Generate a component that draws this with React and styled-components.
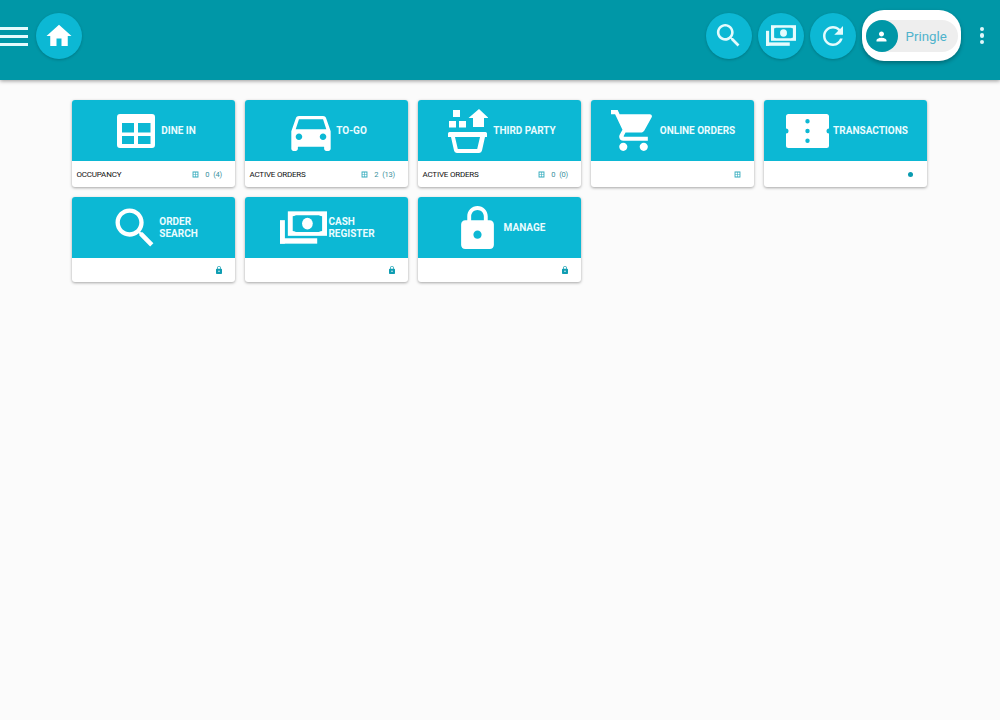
import React from "react";
import styled, { createGlobalStyle } from "styled-components";

const CARD = "#0cb8d4";

const Global = createGlobalStyle`
  html, body { margin: 0; padding: 0; background: #fafafa; }
  body { font-family: Roboto, "Liberation Sans", sans-serif; }
`;

const Page = styled.div`
  width: 1000px;
  height: 720px;
  overflow: hidden;
  background: #fbfbfb;
`;
const TopBar = styled.header`
  height: 80px;
  background: #0097a7;
  box-shadow: 0 1px 4px rgba(0, 0, 0, 0.4);
  display: flex;
  align-items: center;
`;
const LeftGroup = styled.div`
  display: flex;
  align-items: center;
  gap: 8px;
  margin-top: -8px;
`;
const RightGroup = styled.div`
  margin-left: auto;
  display: flex;
  align-items: center;
  gap: 6px;
  margin-top: -9px;
  padding-right: 16px;
`;
const Burger = styled.div`
  width: 28px;
  display: flex;
  flex-direction: column;
  gap: 5px;
  & > i {
    display: block;
    height: 3px;
    background: #e4fbfd;
  }
`;
const RoundButton = styled.div`
  width: 46px;
  height: 46px;
  border-radius: 50%;
  background: ${CARD};
  display: flex;
  align-items: center;
  justify-content: center;
  box-shadow: 0 1px 3px rgba(0, 0, 0, 0.2);
  & > svg {
    display: block;
  }
`;
const UserChip = styled.div`
  width: 99px;
  height: 51px;
  box-sizing: border-box;
  background: #fff;
  border-radius: 22px;
  padding: 10px 3px 9px 4px;
  box-shadow: 0 2px 4px rgba(0, 0, 0, 0.3);
`;
const UserInner = styled.div`
  height: 32px;
  border-radius: 16px;
  background: #eeeeee;
  display: flex;
  align-items: center;
  gap: 8px;
  color: #4fb3cc;
  font-size: 13.3px;
  font-weight: 400;
`;
const Avatar = styled.div`
  width: 32px;
  height: 32px;
  border-radius: 50%;
  background: #0097a7;
  display: flex;
  align-items: center;
  justify-content: center;
`;
const Kebab = styled.div`
  display: flex;
  flex-direction: column;
  gap: 2px;
  margin-left: 13px;
  & > i {
    width: 4.5px;
    height: 4.5px;
    border-radius: 50%;
    background: #dff7fa;
  }
`;
const Grid = styled.main`
  display: grid;
  grid-template-columns: repeat(5, 163px);
  gap: 10px;
  padding: 20px 0 0 72px;
`;
const Card = styled.section`
  height: ${(p) => (p.$short ? "85px" : "87px")};
  border-radius: 3px;
  overflow: hidden;
  background: #fff;
  box-shadow: 0 1px 3px rgba(0, 0, 0, 0.35);
  display: flex;
  flex-direction: column;
`;
const CardTop = styled.div`
  height: 61px;
  background: ${CARD};
  display: flex;
  align-items: center;
  justify-content: center;
  gap: 2px;
`;
const IconBox = styled.div`
  width: 48px;
  height: 48px;
  flex: none;
  display: flex;
  align-items: center;
  justify-content: center;
  transform: translate(${(p) => p.$dx || 0}px, ${(p) => p.$dy || 0}px);
  & > svg {
    flex: none;
    display: block;
  }
`;
const Label = styled.div`
  color: #eafcff;
  font-size: 10px;
  line-height: 12px;
  font-weight: 700;
  padding-top: 1px;
  white-space: ${(p) => (p.$nowrap ? "nowrap" : "normal")};
  width: ${(p) => (p.$nowrap ? "auto" : "min-content")};
`;
const CardFoot = styled.div`
  flex: 1;
  display: flex;
  align-items: center;
  justify-content: space-between;
  padding: 0 13px 0 4.500px;
  font-size: 8px;
  letter-spacing: -0.2px;
  color: #111;
`;
const Stats = styled.div`
  display: flex;
  align-items: center;
  margin-left: auto;
  color: #3a8f9c;
  font-size: 7.500px;
  & > svg {
    display: block;
  }
`;
const Count = styled.span`
  margin-left: ${(p) => p.$gap}px;
`;
const Dot = styled.span`
  width: 5px;
  height: 5px;
  margin-right: 1px;
  border-radius: 50%;
  background: #0a9bb0;
`;

const P = {
  home: "M10 20v-6h4v6h5v-8h3L12 3 2 12h3v8z",
  search:
    "M15.5 14h-.79l-.28-.27C15.41 12.59 16 11.11 16 9.5 16 5.91 13.09 3 9.5 3S3 5.91 3 9.5 5.91 16 9.5 16c1.61 0 3.09-.59 4.23-1.57l.27.28v.79l5 4.99L20.49 19l-4.99-5zm-6 0C7.01 14 5 11.99 5 9.5S7.01 5 9.5 5 14 7.01 14 9.5 11.99 14 9.5 14z",
  refresh:
    "M17.65 6.35C16.2 4.9 14.21 4 12 4c-4.42 0-7.99 3.58-7.99 8s3.57 8 7.99 8c3.73 0 6.84-2.55 7.73-6h-2.08c-.82 2.33-3.04 4-5.65 4-3.31 0-6-2.69-6-6s2.69-6 6-6c1.66 0 3.14.69 4.22 1.78L13 11h7V4l-2.35 2.35z",
  person:
    "M12 12c2.21 0 4-1.79 4-4s-1.79-4-4-4-4 1.79-4 4 1.79 4 4 4zm0 2c-2.67 0-8 1.34-8 4v2h16v-2c0-2.66-5.33-4-8-4z",
  lock: "M18 8h-1V6c0-2.76-2.24-5-5-5S7 3.24 7 6v2H6c-1.1 0-2 .9-2 2v10c0 1.1.9 2 2 2h12c1.1 0 2-.9 2-2V10c0-1.1-.9-2-2-2zm-6 9c-1.1 0-2-.9-2-2s.9-2 2-2 2 .9 2 2-.9 2-2 2zm3.1-9H8.9V6c0-1.71 1.39-3.1 3.1-3.1 1.71 0 3.1 1.39 3.1 3.1v2z",
  car: "M18.92 6.01C18.72 5.42 18.16 5 17.5 5h-11c-.66 0-1.21.42-1.42 1.01L3 12v8c0 .55.45 1 1 1h1c.55 0 1-.45 1-1v-1h12v1c0 .55.45 1 1 1h1c.55 0 1-.45 1-1v-8l-2.08-5.99zM6.5 16c-.83 0-1.5-.67-1.5-1.5S5.67 13 6.5 13s1.5.67 1.5 1.5S7.33 16 6.5 16zm11 0c-.83 0-1.5-.67-1.5-1.5s.67-1.5 1.5-1.5 1.5.67 1.5 1.5-.67 1.5-1.5 1.5zM5 11l1.5-4.5h11L19 11H5z",
  cart: "M7 18c-1.1 0-1.99.9-1.99 2S5.9 22 7 22s2-.9 2-2-.9-2-2-2zM1 2v2h2l3.6 7.59-1.35 2.45c-.16.28-.25.61-.25.96 0 1.1.9 2 2 2h12v-2H7.42c-.14 0-.25-.11-.25-.25l.03-.12.9-1.63h7.45c.75 0 1.41-.41 1.75-1.03l3.58-6.49c.08-.14.12-.31.12-.48 0-.55-.45-1-1-1H5.21l-.94-2H1z",
  cartWheel: "M17 18c-1.1 0-1.99.9-1.99 2s.89 2 1.99 2 2-.9 2-2-.9-2-2-2z",
  table:
    "M3 0h32a3 3 0 0 1 3 3v28a3 3 0 0 1-3 3H3a3 3 0 0 1-3-3V3a3 3 0 0 1 3-3zM5 9v9.500h12V9zm16 0v9.500h12.500V9zM5 22v8h12v-8zm16 0v8h12.500v-8z",
  ticket:
    "M2.500 0h38A2.500 2.500 0 0 1 43 2.500V14.500a2.500 2.500 0 0 0 0 5V31.500A2.500 2.500 0 0 1 40.500 34h-38A2.500 2.500 0 0 1 0 31.500V19.500a2.500 2.500 0 0 0 0-5V2.500A2.500 2.500 0 0 1 2.500 0zM21.500 5a2.200 2.200 0 1 0 0 4.400 2.200 2.200 0 0 0 0-4.400zm0 9.800a2.200 2.200 0 1 0 0 4.400 2.200 2.200 0 0 0 0-4.400zm0 9.800a2.200 2.200 0 1 0 0 4.400 2.200 2.200 0 0 0 0-4.400z",
};

const Ico = ({ d, size = 24, color = "#fff", w, h, vb = "0 0 24 24" }) => (
  <svg width={w || size} height={h || size} viewBox={vb} fill={color} fillRule="evenodd">
    <path d={d} />
  </svg>
);

const Cash = ({ w = 47, h = 33, color = "#fff", cut = CARD }) => (
  <svg width={w} height={h} viewBox="0 0 48 33">
    <rect x="0" y="9" width="5" height="24" fill={color} />
    <rect x="0" y="27.500" width="38" height="5.500" fill={color} />
    <rect x="8" y="0" width="40" height="25" fill={color} />
    <path d="M13 5c2 0 3-1 3-1h24s1 1 3 1v15c-2 0-3 1-3 1H16s-1-1-3-1z" fill={cut} />
    <ellipse cx="28" cy="12.500" rx="5.500" ry="6" fill={color} />
  </svg>
);

const Basket = () => (
  <svg width="40" height="44" viewBox="0 0 40 44" fill="#fff">
    <rect x="5" y="1" width="7" height="7" />
    <rect x="1" y="12" width="7" height="6.500" />
    <rect x="11" y="12" width="7" height="6.500" />
    <path d="M31 0l9.500 9H36v9H25V9h-4.500z" />
    <path
      fillRule="evenodd"
      d="M1.500 23h36a1.500 1.500 0 0 1 1.500 1.500V28h-2l-3 13.500a3 3 0 0 1-3 2.500H9a3 3 0 0 1-3-2.500L3 28H0v-3.500A1.500 1.500 0 0 1 1.500 23zM7 28l2.800 12h19.400L32 28z"
    />
  </svg>
);

const Cart = () => (
  <svg width="44" height="43" viewBox="1 2 21.500 20" fill="#fff" fillRule="evenodd">
    <path d={P.cart} />
    <path d={P.cartWheel} />
  </svg>
);

const Mini = () => (
  <svg width="7" height="7" viewBox="0 0 24 24" fill="#2ea9bb" fillRule="evenodd">
    <path d="M2 2h20v20H2zm3 3v6h6V5zm8 0v6h6V5zm-8 8v6h6v-6zm8 0v6h6v-6z" />
  </svg>
);

const LockMini = () => (
  <svg width="6" height="8" viewBox="4 1 16 21" fill="#0f9db2" fillRule="evenodd">
    <path d={P.lock} />
  </svg>
);

const cards = [
  {
    label: "DINE IN",
    icon: <Ico d={P.table} w={38} h={34} vb="0 0 38 34" />,
    dx: 1,
    foot: "OCCUPANCY",
    stats: ["0", "(4)"],
    nowrap: true,
  },
  {
    label: "TO-GO",
    icon: <Ico d={P.car} w={40} h={35} vb="3 5 18 16" />,
    dx: 1,
    dy: 3,
    foot: "ACTIVE ORDERS",
    stats: ["2", "(13)"],
    nowrap: true,
  },
  { label: "THIRD PARTY", icon: <Basket />, dx: 1, foot: "ACTIVE ORDERS", stats: ["0", "(0)"], nowrap: true },
  { label: "ONLINE ORDERS", icon: <Cart />, dx: -1, mini: <Mini />, nowrap: true },
  { label: "TRANSACTIONS", icon: <Ico d={P.ticket} w={43} h={34} vb="0 0 43 34" />, mini: <Dot />, nowrap: true },
  { label: "ORDER SEARCH", icon: <Ico d={P.search} size={52} />, dx: 2, mini: <LockMini />, short: true },
  { label: "CASH REGISTER", icon: <Cash />, dx: 1, mini: <LockMini />, short: true },
  {
    label: "MANAGE",
    icon: <Ico d={P.lock} w={35} h={43} vb="4 1 16 21" />,
    mini: <LockMini />,
    nowrap: true,
    short: true,
  },
];

export default function App() {
  return (
    <Page>
      <Global />
      <TopBar>
        <LeftGroup>
          <Burger>
            <i />
            <i />
            <i />
          </Burger>
          <RoundButton>
            <Ico d={P.home} size={30} />
          </RoundButton>
        </LeftGroup>
        <RightGroup>
          <RoundButton>
            <Ico d={P.search} size={31} color="#e4fbfd" />
          </RoundButton>
          <RoundButton>
            <Cash w={30} h={21} color="#e4fbfd" />
          </RoundButton>
          <RoundButton>
            <Ico d={P.refresh} size={30} color="#e4fbfd" />
          </RoundButton>
          <UserChip>
            <UserInner>
              <Avatar>
                <Ico d={P.person} size={15} />
              </Avatar>
              Pringle
            </UserInner>
          </UserChip>
          <Kebab>
            <i />
            <i />
            <i />
          </Kebab>
        </RightGroup>
      </TopBar>
      <Grid>
        {cards.map((c) => (
          <Card key={c.label} $short={c.short}>
            <CardTop>
              <IconBox $dx={c.dx} $dy={c.dy}>
                {c.icon}
              </IconBox>
              <Label $nowrap={c.nowrap}>{c.label}</Label>
            </CardTop>
            <CardFoot>
              {c.foot && <span>{c.foot}</span>}
              <Stats>
                {c.stats ? (
                  <>
                    <Mini />
                    <Count $gap={6}>{c.stats[0]}</Count>
                    <Count $gap={4}>{c.stats[1]}</Count>
                  </>
                ) : (
                  c.mini
                )}
              </Stats>
            </CardFoot>
          </Card>
        ))}
      </Grid>
    </Page>
  );
}
